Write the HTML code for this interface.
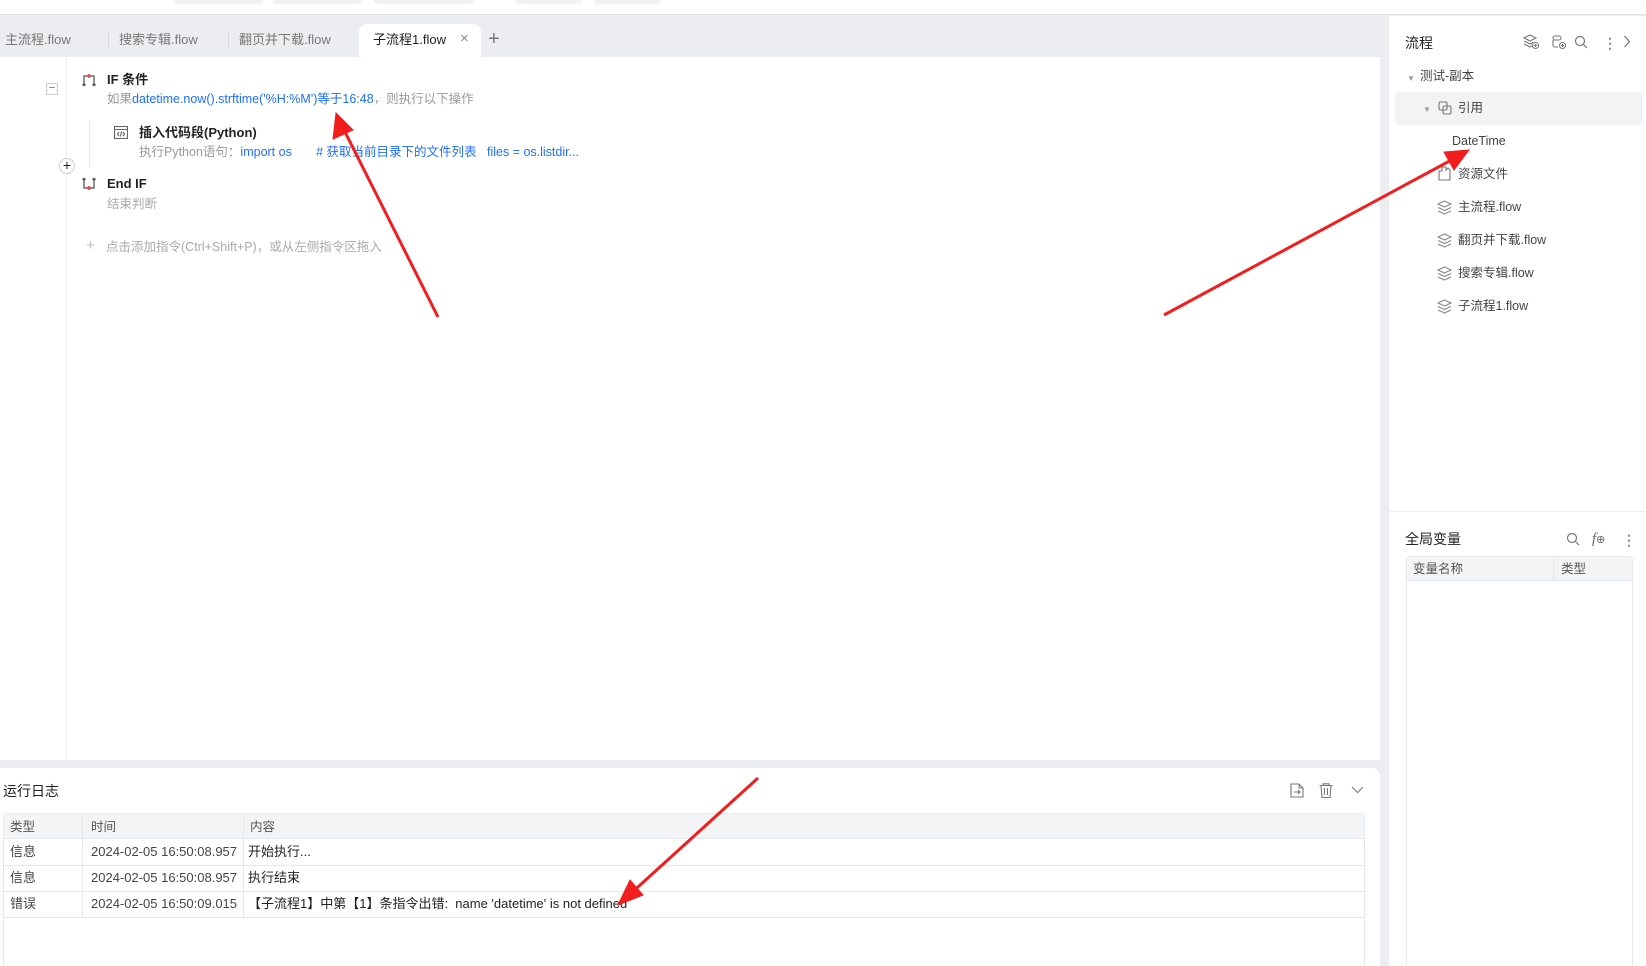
<!DOCTYPE html>
<html><head><meta charset="utf-8"><style>
*{margin:0;padding:0;box-sizing:border-box}
html{overflow:hidden;width:1646px;height:966px}
body{width:1646px;height:966px;overflow:hidden;background:#ebedf0;font-family:"Liberation Sans","Noto Sans CJK SC",sans-serif;font-size:13px;color:#222;position:relative}
.a{position:absolute;white-space:nowrap;line-height:16px}
.g{color:#999}.b{color:#1e6fff}
.topbtn{position:absolute;top:0;height:4px;background:#f0f1f3;border-radius:0 0 4px 4px}
.ic{position:absolute}
</style></head><body>
<div class="a" style="left:0;top:0;width:1646px;height:15px;background:#fff;border-bottom:1px solid #e2e4e8"></div>
<div class="topbtn" style="left:173px;width:90px"></div>
<div class="topbtn" style="left:273px;width:90px"></div>
<div class="topbtn" style="left:374px;width:100px"></div>
<div class="topbtn" style="left:515px;width:67px"></div>
<div class="topbtn" style="left:594px;width:67px"></div>

<!-- tabs -->
<div class="a g" style="left:5px;top:32px;color:#777">主流程.flow</div>
<div class="a" style="left:108px;top:33px;width:1px;height:14px;background:#d5d7db"></div>
<div class="a" style="left:119px;top:32px;color:#777">搜索专辑.flow</div>
<div class="a" style="left:228px;top:33px;width:1px;height:14px;background:#d5d7db"></div>
<div class="a" style="left:239px;top:32px;color:#777">翻页并下载.flow</div>
<div class="a" style="left:359px;top:24px;width:122px;height:34px;background:#fff;border-radius:8px 8px 0 0"></div>
<div class="a" style="left:373px;top:32px;color:#222">子流程1.flow</div>
<div class="a" style="left:460px;top:31px;color:#888;font-size:15px">×</div>
<div class="a" style="left:488px;top:31px;color:#777;font-size:20px;font-weight:300">+</div>

<!-- main -->
<div class="a" style="left:0;top:57px;width:1380px;height:703px;background:#fff"></div>
<div class="a" style="left:66px;top:57px;width:1px;height:703px;background:#eceef1"></div>
<div class="a" style="left:46px;top:83px;width:12px;height:12px;border:1px solid #ccc;font-size:11px;line-height:9px;text-align:center;color:#666">−</div>
<svg class="ic" style="left:82px;top:73px" width="14" height="14" viewBox="0 0 14 14" fill="none" stroke="#555" stroke-width="1.3"><path d="M2 13V3h10v10M2 13l-1.5-2M2 13l1.5-2M12 13l-1.5-2M12 13l1.5-2"/><circle cx="7" cy="3" r="1.3" stroke="#e55"/></svg>
<div class="a" style="left:107px;top:72px;font-weight:bold">IF 条件</div>
<div class="a g" style="left:107px;top:91px;font-size:12.5px">如果<span class="b">datetime.now().strftime('%H:%M')等于16:48</span>，则执行以下操作</div>
<div class="a" style="left:89px;top:121px;width:1px;height:47px;background:#e6e8eb"></div>
<svg class="ic" style="left:114px;top:126px" width="14" height="13" viewBox="0 0 14 13" fill="none" stroke="#666" stroke-width="1.1"><rect x="0.5" y="0.5" width="13" height="12"/><path d="M0.5 3.5h13M5 6l-1.5 2 1.5 2M9 6l1.5 2-1.5 2M7.5 5.5l-1 5"/></svg>
<div class="a" style="left:139px;top:125px;font-weight:bold">插入代码段(Python)</div>
<div class="a g" style="left:139px;top:144px;font-size:12.5px">执行Python语句：<span class="b">import os &nbsp;&nbsp;&nbsp;&nbsp;&nbsp;&nbsp;# 获取当前目录下的文件列表 &nbsp;&nbsp;files = os.listdir...</span></div>
<div class="a" style="left:59px;top:158px;width:16px;height:16px;border:1px solid #ccc;border-radius:50%;background:#fff;text-align:center;line-height:13px;font-size:14px">+</div>
<svg class="ic" style="left:82px;top:177px" width="14" height="14" viewBox="0 0 14 14" fill="none" stroke="#555" stroke-width="1.3"><path d="M2 1v10h10V1M2 1L.5 3M2 1l1.5 2M12 1l-1.5 2M12 1l1.5 2"/><circle cx="7" cy="11" r="1.3" stroke="#e55"/></svg>
<div class="a" style="left:107px;top:176px;font-weight:bold">End IF</div>
<div class="a g" style="left:107px;top:196px;font-size:12.5px;color:#aaa">结束判断</div>
<div class="a" style="left:86px;top:238px;color:#bbb;font-size:15px">+</div>
<div class="a" style="left:106px;top:239px;color:#aaa;font-size:12.5px">点击添加指令(Ctrl+Shift+P)，或从左侧指令区拖入</div>

<!-- log -->
<div class="a" style="left:0;top:768px;width:1380px;height:198px;background:#fff;border-radius:0 8px 0 0"></div>
<div class="a" style="left:3px;top:783px;font-size:14px">运行日志</div>
<svg class="ic" style="left:1290px;top:783px" width="14" height="15" viewBox="0 0 14 15" fill="none" stroke="#777" stroke-width="1.1"><path d="M1 1h8l4 4v9H1z M9 1v4h4M4 9h6M8 7l2 2-2 2"/></svg>
<svg class="ic" style="left:1319px;top:783px" width="14" height="15" viewBox="0 0 14 15" fill="none" stroke="#777" stroke-width="1.1"><path d="M0.5 2.5h13M4 2.5V.8h6v1.7M2 2.5l1 12h8l1-12M5.5 5v7M8.5 5v7"/></svg>
<svg class="ic" style="left:1351px;top:786px" width="13" height="8" viewBox="0 0 13 8" fill="none" stroke="#777" stroke-width="1.1"><path d="M1 1l5.5 5.5L12 1"/></svg>
<div class="a" style="left:3px;top:813px;width:1362px;height:153px;border:1px solid #e6e8eb;border-bottom:none;border-radius:4px 4px 0 0"></div>
<div class="a" style="left:4px;top:814px;width:1360px;height:25px;background:#f3f4f6;border-bottom:1px solid #e6e8eb"></div>
<div class="a" style="left:4px;top:865px;width:1360px;height:1px;background:#e6e8eb"></div>
<div class="a" style="left:4px;top:891px;width:1360px;height:1px;background:#e6e8eb"></div>
<div class="a" style="left:4px;top:917px;width:1360px;height:1px;background:#e6e8eb"></div>
<div class="a" style="left:82px;top:814px;width:1px;height:103px;background:#e6e8eb"></div>
<div class="a" style="left:243px;top:814px;width:1px;height:103px;background:#e6e8eb"></div>
<div class="a" style="left:10px;top:819px;color:#555;font-size:12.5px">类型</div>
<div class="a" style="left:91px;top:819px;color:#555;font-size:12.5px">时间</div>
<div class="a" style="left:250px;top:819px;color:#555;font-size:12.5px">内容</div>
<div class="a" style="left:10px;top:844px;color:#444">信息</div><div class="a" style="left:91px;top:844px;color:#444">2024-02-05 16:50:08.957</div><div class="a" style="left:248px;top:844px">开始执行...</div>
<div class="a" style="left:10px;top:870px;color:#444">信息</div><div class="a" style="left:91px;top:870px;color:#444">2024-02-05 16:50:08.957</div><div class="a" style="left:248px;top:870px">执行结束</div>
<div class="a" style="left:10px;top:896px;color:#444">错误</div><div class="a" style="left:91px;top:896px;color:#444">2024-02-05 16:50:09.015</div><div class="a" style="left:248px;top:896px">【子流程1】中第【1】条指令出错:&nbsp; name 'datetime' is not defined</div>

<!-- right panel -->
<div class="a" style="left:1389px;top:16px;width:257px;height:950px;background:#fff"></div>
<div class="a" style="left:1405px;top:35px;font-size:14px">流程</div>
<svg class="ic" style="left:1523px;top:34px" width="16" height="16" viewBox="0 0 16 16" fill="none" stroke="#777" stroke-width="1.1"><path d="M1 4l6-3 6 3-6 3zM1 7l6 3 3-1.5M1 10l6 3 2-1"/><circle cx="12.5" cy="11.5" r="3"/><path d="M12.5 10v3M11 11.5h3"/></svg>
<svg class="ic" style="left:1550px;top:34px" width="16" height="16" viewBox="0 0 16 16" fill="none" stroke="#777" stroke-width="1.1"><path d="M5 2h4a2 2 0 010 4H5a2 2 0 01-2-2 2 2 0 012-2zM3 6v5a2 2 0 002 2h3"/><circle cx="12.5" cy="11.5" r="3"/><path d="M12.5 10v3M11 11.5h3"/></svg>
<svg class="ic" style="left:1574px;top:35px" width="14" height="14" viewBox="0 0 14 14" fill="none" stroke="#777" stroke-width="1.2"><circle cx="6" cy="6" r="4.5"/><path d="M9.5 9.5L13 13"/></svg>
<div class="a" style="left:1603px;top:35px;color:#888;font-size:14px;font-weight:bold">⋮</div>
<svg class="ic" style="left:1623px;top:35px" width="8" height="13" viewBox="0 0 8 13" fill="none" stroke="#777" stroke-width="1.2"><path d="M1.5 1l5 5.5-5 5.5"/></svg>
<div class="a" style="left:1407px;top:71px;color:#999;font-size:8px">▼</div>
<div class="a" style="left:1420px;top:68px;color:#444;font-size:12.5px">测试-副本</div>
<div class="a" style="left:1395px;top:92px;width:248px;height:33px;background:#f2f3f5;border-radius:4px"></div>
<div class="a" style="left:1423px;top:102px;color:#999;font-size:8px">▼</div>
<svg class="ic" style="left:1438px;top:101px" width="14" height="14" viewBox="0 0 14 14" fill="none" stroke="#777" stroke-width="1.1"><rect x="1" y="1" width="8" height="8" rx="1.5"/><rect x="5" y="5" width="8" height="8" rx="1.5"/></svg>
<div class="a" style="left:1458px;top:100px;color:#444;font-size:12.5px">引用</div>
<div class="a" style="left:1452px;top:133px;color:#444;font-size:12.5px">DateTime</div>
<svg class="ic" style="left:1438px;top:166px" width="14" height="15" viewBox="0 0 14 15" fill="none" stroke="#777" stroke-width="1.1"><path d="M1 5h3V1h4v3l2-2 2 2v10H1z"/></svg>
<div class="a" style="left:1458px;top:166px;color:#444;font-size:12.5px">资源文件</div>
<div class="a" style="left:1458px;top:199px;color:#444;font-size:12.5px">主流程.flow</div>
<div class="a" style="left:1458px;top:232px;color:#444;font-size:12.5px">翻页并下载.flow</div>
<div class="a" style="left:1458px;top:265px;color:#444;font-size:12.5px">搜索专辑.flow</div>
<div class="a" style="left:1458px;top:298px;color:#444;font-size:12.5px">子流程1.flow</div>
<svg class="ic" style="left:1437px;top:200px" width="15" height="120" viewBox="0 0 15 120" fill="none" stroke="#888" stroke-width="1.1">
<g><path d="M1 4l6.5-3 6.5 3-6.5 3zM1 7.5l6.5 3 6.5-3M1 11l6.5 3 6.5-3"/></g>
<g transform="translate(0,33)"><path d="M1 4l6.5-3 6.5 3-6.5 3zM1 7.5l6.5 3 6.5-3M1 11l6.5 3 6.5-3"/></g>
<g transform="translate(0,66)"><path d="M1 4l6.5-3 6.5 3-6.5 3zM1 7.5l6.5 3 6.5-3M1 11l6.5 3 6.5-3"/></g>
<g transform="translate(0,99)"><path d="M1 4l6.5-3 6.5 3-6.5 3zM1 7.5l6.5 3 6.5-3M1 11l6.5 3 6.5-3"/></g>
</svg>
<div class="a" style="left:1389px;top:511px;width:257px;height:1px;background:#eceef1"></div>
<div class="a" style="left:1405px;top:531px;font-size:14px">全局变量</div>
<svg class="ic" style="left:1566px;top:532px" width="14" height="14" viewBox="0 0 14 14" fill="none" stroke="#777" stroke-width="1.2"><circle cx="6" cy="6" r="4.5"/><path d="M9.5 9.5L13 13"/></svg>
<div class="a" style="left:1592px;top:531px;color:#666;font-size:15px;font-style:italic;font-family:'Liberation Serif',serif">f<span style="font-size:11px;font-style:normal">⊕</span></div>
<div class="a" style="left:1622px;top:532px;color:#888;font-size:14px;font-weight:bold">⋮</div>
<div class="a" style="left:1406px;top:556px;width:227px;height:410px;border:1px solid #e6e8eb;border-bottom:none;border-radius:4px 4px 0 0"></div>
<div class="a" style="left:1407px;top:557px;width:225px;height:24px;background:#f3f4f6;border-bottom:1px solid #e6e8eb"></div>
<div class="a" style="left:1553px;top:557px;width:1px;height:24px;background:#e6e8eb"></div>
<div class="a" style="left:1413px;top:561px;color:#555;font-size:12.5px">变量名称</div>
<div class="a" style="left:1561px;top:561px;color:#555;font-size:12.5px">类型</div>

<!-- arrows -->
<svg class="a" style="left:0;top:0" width="1646" height="966">
<g fill="#f21d1d" stroke="#f21d1d">
<line x1="438" y1="317" x2="342" y2="126" stroke-width="3"/>
<polygon points="336,113 333,139 353,130" stroke-width="1"/>
<line x1="1164" y1="315" x2="1457" y2="157" stroke-width="3"/>
<polygon points="1469,150 1444,152 1454,170" stroke-width="1"/>
<line x1="758" y1="778" x2="628" y2="896" stroke-width="3"/>
<polygon points="618,905 630,880 643,895" stroke-width="1"/>
</g></svg>
</body></html>
